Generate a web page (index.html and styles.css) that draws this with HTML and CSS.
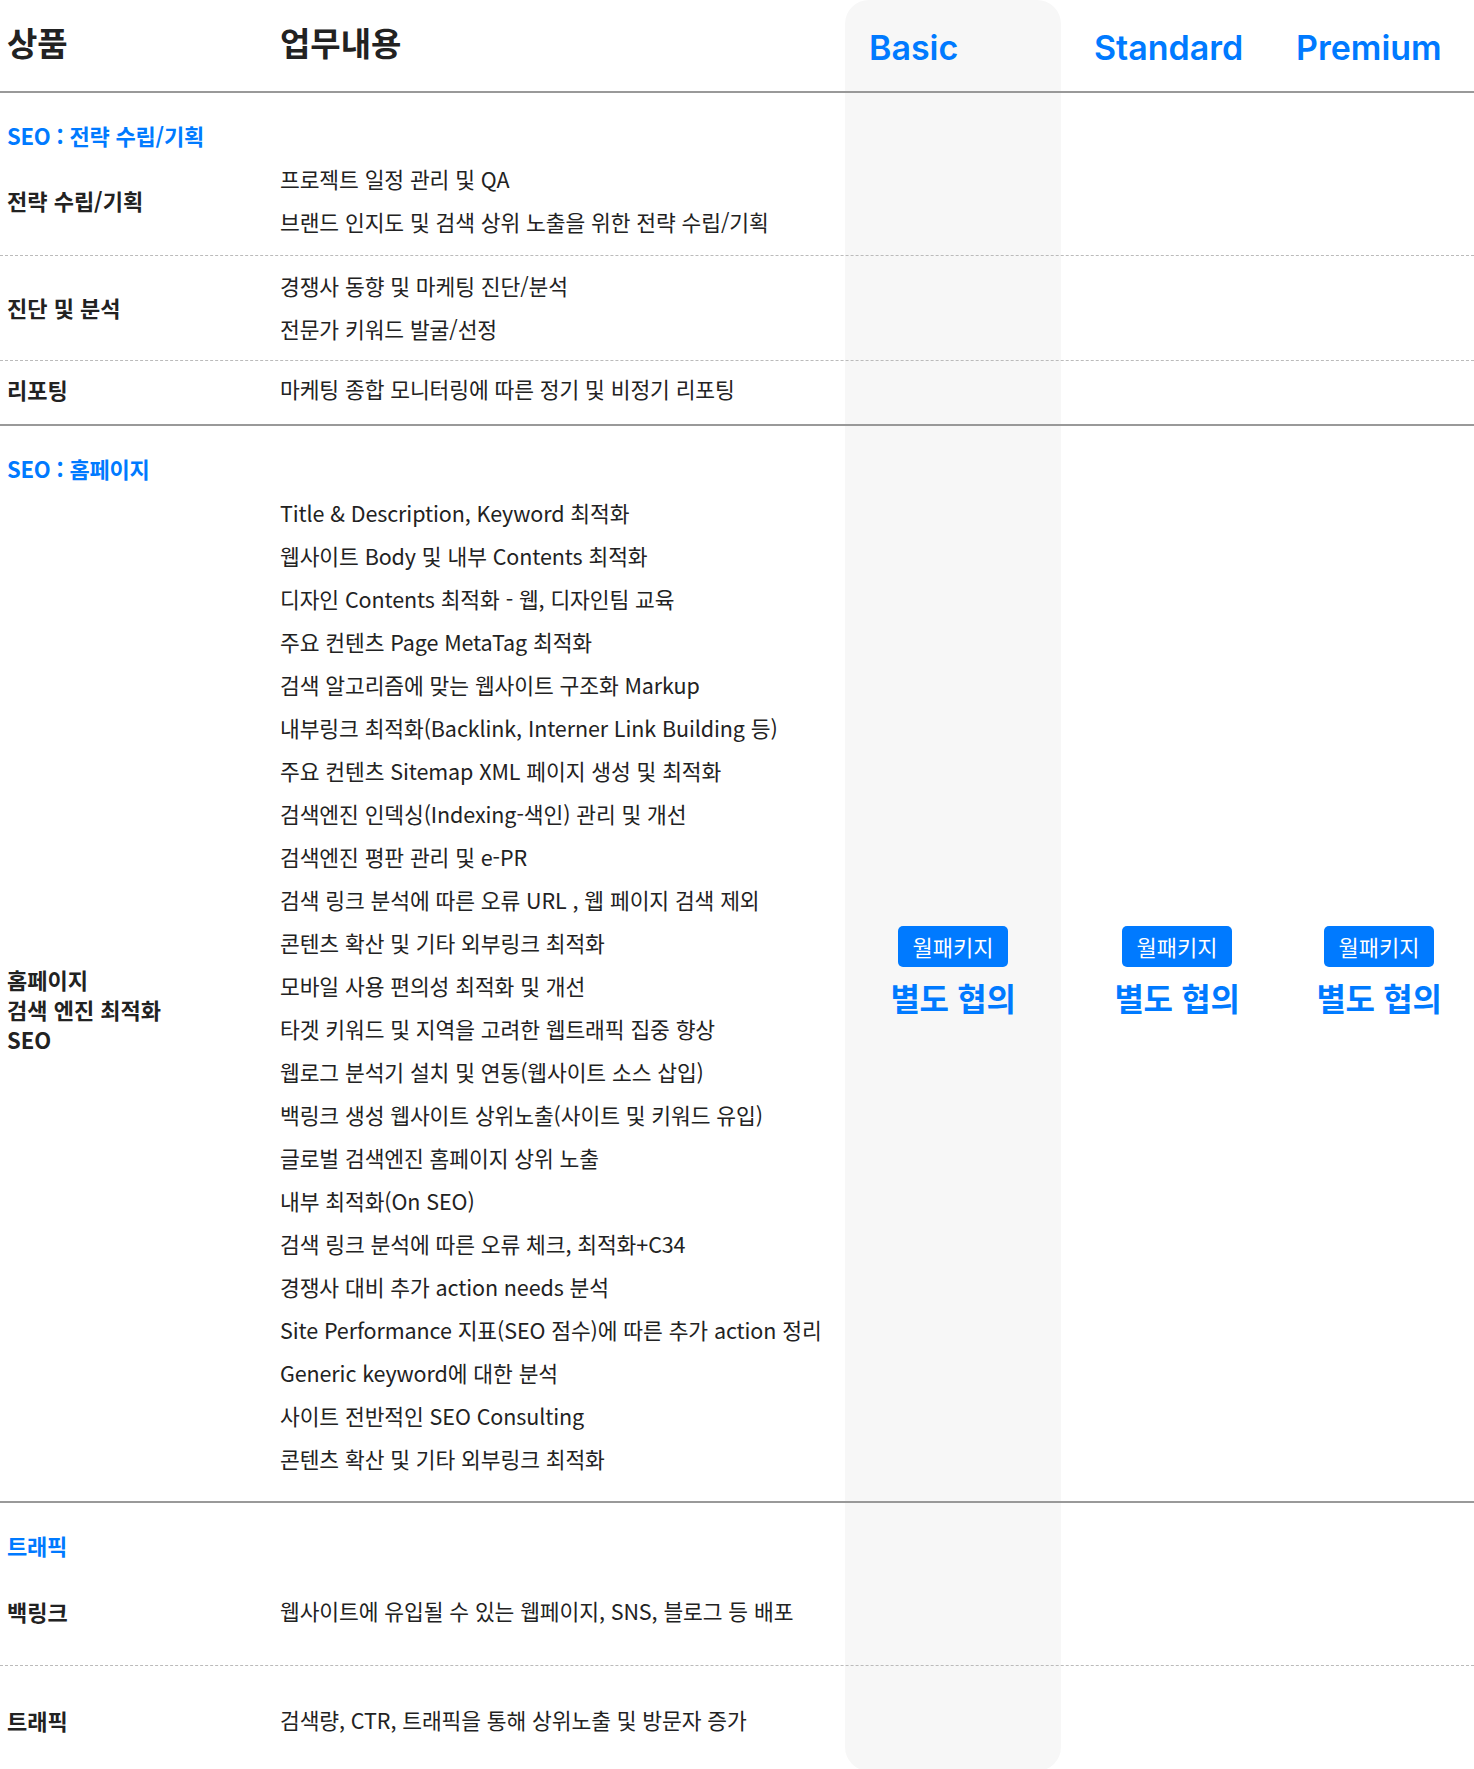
FILE: index.html
```html
<!DOCTYPE html>
<html lang="ko">

<head>
	<meta charset="UTF-8">
	<title>SEO 상품 안내</title>
	<link rel="stylesheet" href="styles.css">
</head>

<body>
	<div class="plan-table">
		<!-- Basic 열 배경 -->
		<div class="basic-bg"></div>

		<div class="row row--head">
			<div class="cell-label head-title">상품</div>
			<div class="cell-content head-title">업무내용</div>
			<div class="plan-name plan-name--basic">Basic</div>
			<div class="plan-name plan-name--standard">Standard</div>
			<div class="plan-name plan-name--premium">Premium</div>
		</div>

		<!-- SEO : 전략 수립/기획 -->
		<div class="group-title">SEO : 전략 수립/기획</div>
		<div class="row row--first">
			<div class="cell-label">전략 수립/기획</div>
			<ul class="cell-content task-list">
				<li>프로젝트 일정 관리 및 QA</li>
				<li>브랜드 인지도 및 검색 상위 노출을 위한 전략 수립/기획</li>
			</ul>
		</div>
		<div class="row">
			<div class="cell-label">진단 및 분석</div>
			<ul class="cell-content task-list">
				<li>경쟁사 동향 및 마케팅 진단/분석</li>
				<li>전문가 키워드 발굴/선정</li>
			</ul>
		</div>
		<div class="row row--end">
			<div class="cell-label">리포팅</div>
			<ul class="cell-content task-list">
				<li>마케팅 종합 모니터링에 따른 정기 및 비정기 리포팅</li>
			</ul>
		</div>

		<!-- SEO : 홈페이지 -->
		<div class="group-title">SEO : 홈페이지</div>
		<div class="row row--end row--home">
			<div class="cell-label cell-label--home">홈페이지<br>검색 엔진 최적화<br>SEO</div>
			<ul class="cell-content task-list">
				<li>Title &amp; Description, Keyword 최적화</li>
				<li>웹사이트 Body 및 내부 Contents 최적화</li>
				<li>디자인 Contents 최적화 - 웹, 디자인팀 교육</li>
				<li>주요 컨텐츠 Page MetaTag 최적화</li>
				<li>검색 알고리즘에 맞는 웹사이트 구조화 Markup</li>
				<li>내부링크 최적화(Backlink, Interner Link Building 등)</li>
				<li>주요 컨텐츠 Sitemap XML 페이지 생성 및 최적화</li>
				<li>검색엔진 인덱싱(Indexing-색인) 관리 및 개선</li>
				<li>검색엔진 평판 관리 및 e-PR</li>
				<li>검색 링크 분석에 따른 오류 URL , 웹 페이지 검색 제외</li>
				<li>콘텐츠 확산 및 기타 외부링크 최적화</li>
				<li>모바일 사용 편의성 최적화 및 개선</li>
				<li>타겟 키워드 및 지역을 고려한 웹트래픽 집중 향상</li>
				<li>웹로그 분석기 설치 및 연동(웹사이트 소스 삽입)</li>
				<li>백링크 생성 웹사이트 상위노출(사이트 및 키워드 유입)</li>
				<li>글로벌 검색엔진 홈페이지 상위 노출</li>
				<li>내부 최적화(On SEO)</li>
				<li>검색 링크 분석에 따른 오류 체크, 최적화+C34</li>
				<li>경쟁사 대비 추가 action needs 분석</li>
				<li>Site Performance 지표(SEO 점수)에 따른 추가 action 정리</li>
				<li>Generic keyword에 대한 분석</li>
				<li>사이트 전반적인 SEO Consulting</li>
				<li>콘텐츠 확산 및 기타 외부링크 최적화</li>
			</ul>
			<div class="offer">
				<span class="badge">월패키지</span>
				<strong class="offer-text">별도 협의</strong>
			</div>
			<div class="offer">
				<span class="badge">월패키지</span>
				<strong class="offer-text">별도 협의</strong>
			</div>
			<div class="offer">
				<span class="badge">월패키지</span>
				<strong class="offer-text">별도 협의</strong>
			</div>
		</div>

		<!-- 트래픽 -->
		<div class="group-title">트래픽</div>
		<div class="row row--tall">
			<div class="cell-label">백링크</div>
			<ul class="cell-content task-list">
				<li>웹사이트에 유입될 수 있는 웹페이지, SNS, 블로그 등 배포</li>
			</ul>
		</div>
		<div class="row row--tall row--last">
			<div class="cell-label">트래픽</div>
			<ul class="cell-content task-list">
				<li>검색량, CTR, 트래픽을 통해 상위노출 및 방문자 증가</li>
			</ul>
		</div>
	</div>
</body>

</html>
```

FILE: styles.css
```css
* {
	box-sizing: border-box;
}

body,
div,
ul,
li {
	margin: 0;
	padding: 0;
}

ul {
	list-style-type: none;
}

body {
	font-family: "Noto Sans CJK KR", "Noto Sans", sans-serif;
	color: #222;
	background: #fff;
}

.plan-table {
	position: relative;
	width: 1474px;
}

/* Basic 열 전체에 깔리는 회색 배경 */
.basic-bg {
	position: absolute;
	top: 0;
	bottom: 0;
	left: 845px;
	width: 216px;
	background: #f7f7f7;
	border-radius: 24px;
}

.row {
	position: relative;
	display: grid;
	grid-template-columns: 280px 565px 216px 232px 172px 1fr;
	align-items: center;
	padding: 8px 0 10px;
	border-bottom: 1px dashed #bbb;
}

.row--head {
	height: 93px;
	padding: 0;
	border-bottom: 2px solid #999;
}

.row--first {
	padding: 7px 0 12px;
}

.row--end {
	padding: 6px 0 14px;
	border-bottom: 2px solid #999;
}

.row--home {
	padding: 8px 0 21px;
}

.row--tall {
	padding: 29px 0 33px;
}

.row--last {
	padding: 32px 0 30px;
	border-bottom: 0;
}

.cell-label {
	padding-left: 7px;
	font-size: 22px;
	font-weight: 700;
	line-height: 30px;
}

.cell-label--home {
	margin-top: 47px;
}

.head-title {
	margin-bottom: 8px;
	font-size: 33px;
	line-height: 40px;
}

.cell-content.head-title {
	font-weight: 700;
}

.plan-name {
	margin-top: 4px;
	font-family: Inter, "Noto Sans", sans-serif;
	font-size: 34px;
	font-weight: 600;
	line-height: 40px;
	color: #007aff;
	white-space: nowrap;
}

.plan-name--basic {
	padding-left: 24px;
}

.plan-name--standard {
	padding-left: 33px;
}

.plan-name--premium {
	padding-left: 3px;
}

.group-title {
	position: relative;
	padding: 27px 7px 0;
	font-size: 22px;
	font-weight: 700;
	line-height: 30px;
	letter-spacing: -0.2px;
	color: #007aff;
}

.task-list li {
	font-size: 21.5px;
	line-height: 43px;
	letter-spacing: -0.1px;
}

.offer {
	display: flex;
	flex-direction: column;
	align-items: center;
	gap: 10px;
	margin-bottom: 28px;
}

.badge {
	height: 41px;
	padding: 0 15px;
	border-radius: 5px;
	background: #007aff;
	color: #fff;
	font-size: 22px;
	line-height: 41px;
}

.offer-text {
	font-size: 32px;
	font-weight: 700;
	line-height: 40px;
	letter-spacing: -0.3px;
	color: #007aff;
	white-space: nowrap;
}
```
